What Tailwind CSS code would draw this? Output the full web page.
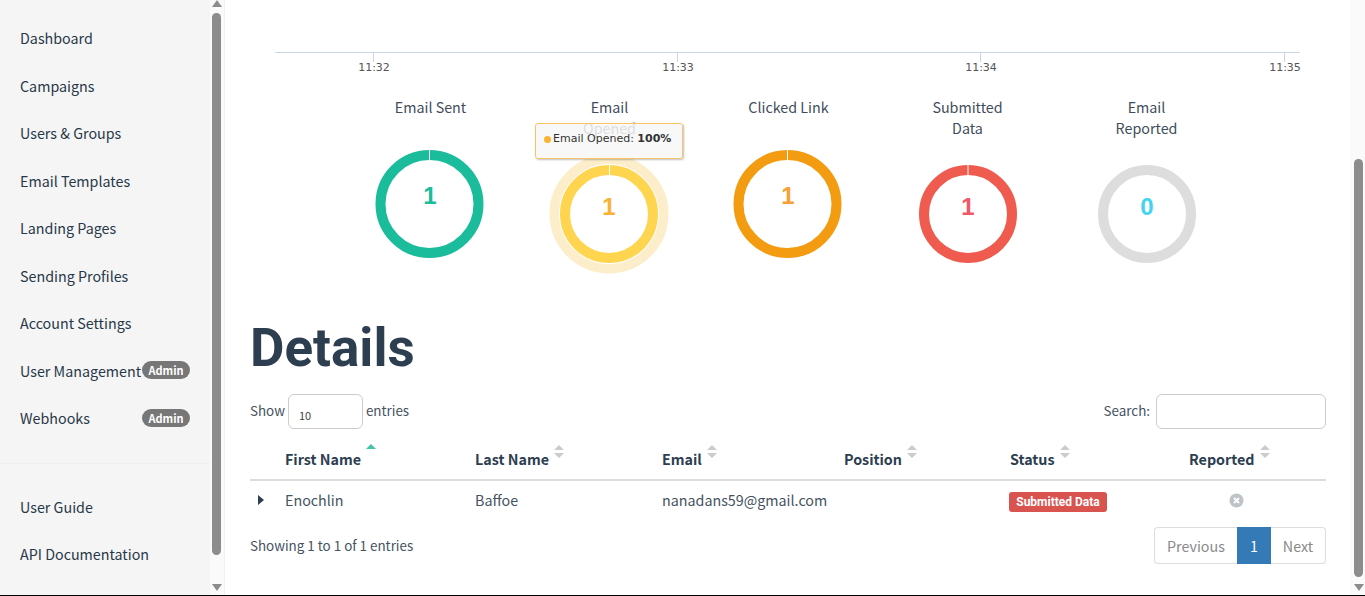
<!DOCTYPE html>
<html lang="en">
<head>
    <meta charset="UTF-8">
    <title>Campaign Results</title>
    <script src="https://cdn.jsdelivr.net/npm/@tailwindcss/browser@4"></script>
</head>
<body class="bg-white overflow-hidden font-['Noto_Sans_CJK_SC','Source_Sans_Pro',sans-serif] text-[#2c3e50]">
<div class="flex flex-col w-[1365px] h-[596px] overflow-hidden">
    <div class="flex flex-1 min-h-0">

        <!-- Sidebar -->
        <aside class="w-[210px] shrink-0 bg-[#f5f5f5] text-[14.3px] text-[#283848]">
            <nav class="pt-[14px]">
                <a class="flex items-center h-[47.5px] px-5">Dashboard</a>
                <a class="flex items-center h-[47.5px] px-5">Campaigns</a>
                <a class="flex items-center h-[47.5px] px-5">Users &amp; Groups</a>
                <a class="flex items-center h-[47.5px] px-5">Email Templates</a>
                <a class="flex items-center h-[47.5px] px-5">Landing Pages</a>
                <a class="flex items-center h-[47.5px] px-5">Sending Profiles</a>
                <a class="flex items-center h-[47.5px] px-5">Account Settings</a>
                <a class="flex items-center justify-between h-[47.5px] px-5 whitespace-nowrap">User Management<span class="w-[48px] h-[18px] shrink-0 rounded-full bg-[#777] text-white text-[11px] font-bold flex items-center justify-center">Admin</span></a>
                <a class="flex items-center justify-between h-[47.5px] px-5">Webhooks<span class="w-[48px] h-[18px] mt-px shrink-0 rounded-full bg-[#777] text-white text-[11px] font-bold flex items-center justify-center">Admin</span></a>
            </nav>
            <div class="mt-[21px] border-t border-[#eeeeee] pt-[19px]">
                <a class="flex items-center h-[47.5px] px-5">User Guide</a>
                <a class="flex items-center h-[47.5px] px-5">API Documentation</a>
            </div>
        </aside>

        <!-- Sidebar scrollbar -->
        <div class="w-[15px] shrink-0 bg-[#fafafa] border-r border-[#f0f0f0] flex flex-col items-start pl-[2px]">
            <svg class="w-[10px] h-[7px] shrink-0" viewBox="0 0 10 7"><path d="M5 0 L10 7 L0 7 Z" fill="#8c8c8c"/></svg>
            <div class="w-[9px] h-[542px] mt-[6px] rounded-full bg-[#8c8c8c]"></div>
            <svg class="w-[10px] h-[7px] mt-[29px] shrink-0" viewBox="0 0 10 7"><path d="M0 0 L10 0 L5 7 Z" fill="#8c8c8c"/></svg>
        </div>

        <!-- Main -->
        <main class="flex-1 min-w-0 relative">
            <svg class="block w-[1125px] h-[96px]" viewBox="0 0 1125 96">
                <line x1="50" y1="52.5" x2="1075" y2="52.5" stroke="#ccd6eb"/>
                <g stroke="#ccd6eb">
                    <line x1="148.5" y1="52" x2="148.5" y2="62"/>
                    <line x1="452.5" y1="52" x2="452.5" y2="62"/>
                    <line x1="755.5" y1="52" x2="755.5" y2="62"/>
                    <line x1="1059.5" y1="52" x2="1059.5" y2="62"/>
                </g>
                <g font-family="'DejaVu Sans', sans-serif" font-size="11" fill="#555" text-anchor="middle">
                    <text x="149" y="71">11:32</text>
                    <text x="453" y="71">11:33</text>
                    <text x="756" y="71">11:34</text>
                    <text x="1060" y="71">11:35</text>
                </g>
            </svg>

            <!-- Donuts -->
            <div class="grid grid-cols-[179px_179px_179px_179px_179px] ml-[116px] text-[14.3px] leading-[21px] text-[#3f4d5b] text-center">
                <div class="flex flex-col items-center">
                    <div class="w-[100px]">Email Sent</div>
                    <svg class="w-[130px] h-[130px] mt-[22px]" viewBox="0 0 130 130">
                        <circle cx="63.5" cy="65" r="49" fill="none" stroke="#1abc9c" stroke-width="10"/>
                        <line x1="63.5" y1="10" x2="63.5" y2="21" stroke="#fff"/>
                        <text x="64" y="65" font-family="'Liberation Sans', sans-serif" font-weight="700" font-size="24" fill="#1abc9c" text-anchor="middle">1</text>
                    </svg>
                </div>
                <div class="flex flex-col items-center">
                    <div class="w-[70px]">Email Opened</div>
                    <svg class="w-[130px] h-[130px] mt-[11px]" viewBox="0 0 130 130">
                        <circle cx="64" cy="65" r="54.75" fill="none" stroke="#fdeecb" stroke-width="9.5"/>
                        <circle cx="64" cy="65" r="44" fill="none" stroke="#ffd54f" stroke-width="10"/>
                        <line x1="64.5" y1="15" x2="64.5" y2="26" stroke="#fff"/>
                        <text x="64" y="66" font-family="'Liberation Sans', sans-serif" font-weight="700" font-size="24" fill="#f9b233" text-anchor="middle">1</text>
                    </svg>
                </div>
                <div class="flex flex-col items-center">
                    <div class="w-[100px]">Clicked Link</div>
                    <svg class="w-[130px] h-[130px] mt-[22px]" viewBox="0 0 130 130">
                        <circle cx="63.5" cy="65" r="49" fill="none" stroke="#f39c12" stroke-width="10"/>
                        <line x1="63.5" y1="10" x2="63.5" y2="21" stroke="#fff"/>
                        <text x="64" y="65" font-family="'Liberation Sans', sans-serif" font-weight="700" font-size="24" fill="#f7a035" text-anchor="middle">1</text>
                    </svg>
                </div>
                <div class="flex flex-col items-center">
                    <div class="w-[80px]">Submitted Data</div>
                    <svg class="w-[130px] h-[130px] mt-[11px]" viewBox="0 0 130 130">
                        <circle cx="65" cy="65" r="44" fill="none" stroke="#f05b4f" stroke-width="10"/>
                        <line x1="65" y1="15" x2="65" y2="26" stroke="#fff"/>
                        <text x="65" y="66" font-family="'Liberation Sans', sans-serif" font-weight="700" font-size="24" fill="#f25767" text-anchor="middle">1</text>
                    </svg>
                </div>
                <div class="flex flex-col items-center">
                    <div class="w-[70px]">Email Reported</div>
                    <svg class="w-[130px] h-[130px] mt-[11px]" viewBox="0 0 130 130">
                        <circle cx="65" cy="65" r="44" fill="none" stroke="#dddddd" stroke-width="10"/>
                        <text x="65" y="66" font-family="'Liberation Sans', sans-serif" font-weight="700" font-size="24" fill="#3fd4f0" text-anchor="middle">0</text>
                    </svg>
                </div>
            </div>

            <!-- Chart tooltip -->
            <div class="absolute left-[310px] top-[123px] w-[148px] h-[36px] rounded-[3px] border border-[#f7c468] bg-[#f7f7f7]/85 shadow-[1px_1px_2px_rgba(0,0,0,0.25)] flex items-center pl-[8px] pb-[3px] font-['DejaVu_Sans',sans-serif] text-[11px] text-[#333] whitespace-nowrap">
                <span class="w-[7px] h-[7px] rounded-full bg-[#f9b233] mr-[2px]"></span>Email Opened:&nbsp;<b>100%</b>
            </div>

            <!-- Details -->
            <div class="pl-[25px] pr-[24px] mt-[36px]">
                <h1 class="font-['Roboto',sans-serif] font-bold text-[53px] leading-[66px] text-[#2c3e50]">Details</h1>

                <div class="flex items-center justify-between mt-[13px] text-[13.4px] text-[#45535f]">
                    <div class="flex items-center gap-[3px]">
                        <span class="pb-[3px]">Show</span>
                        <div class="w-[75px] h-[35px] border border-[#cccccc] rounded-[6px] text-[11px] pl-[10px] pt-[11px] leading-[18px] text-[#444]">10</div>
                        <span class="pb-[3px]">entries</span>
                    </div>
                    <div class="flex items-center gap-[6px]">
                        <span class="pb-[3px]">Search:</span>
                        <div class="w-[170px] h-[35px] border border-[#cccccc] rounded-[6px]"></div>
                    </div>
                </div>

                <table class="table-fixed w-[1076px] mt-[10px] border-collapse text-[14.3px]">
                    <colgroup>
                        <col class="w-[35px]"><col class="w-[190px]"><col class="w-[187px]"><col class="w-[182px]"><col class="w-[166px]"><col class="w-[179px]"><col>
                    </colgroup>
                    <thead>
                        <tr class="h-[41px] border-b-2 border-[#dddddd] text-left">
                            <th></th>
                            <th class="font-bold align-bottom pb-[10px] leading-[20px]"><span class="inline-flex items-start">First Name<svg class="w-[10px] h-[14px] ml-[5px] -mt-[5px]" viewBox="0 0 10 14"><path d="M5 0 L10 5 L0 5 Z" fill="#45c4a8"/></svg></span></th>
                            <th class="font-bold align-bottom pb-[10px] leading-[20px]"><span class="inline-flex items-start">Last Name<svg class="w-[10px] h-[14px] ml-[5px] -mt-[4px]" viewBox="0 0 10 14"><path d="M5 0 L10 5 L0 5 Z M0 8 L10 8 L5 13 Z" fill="#cccccc"/></svg></span></th>
                            <th class="font-bold align-bottom pb-[10px] leading-[20px]"><span class="inline-flex items-start">Email<svg class="w-[10px] h-[14px] ml-[5px] -mt-[4px]" viewBox="0 0 10 14"><path d="M5 0 L10 5 L0 5 Z M0 8 L10 8 L5 13 Z" fill="#cccccc"/></svg></span></th>
                            <th class="font-bold align-bottom pb-[10px] leading-[20px]"><span class="inline-flex items-start">Position<svg class="w-[10px] h-[14px] ml-[5px] -mt-[4px]" viewBox="0 0 10 14"><path d="M5 0 L10 5 L0 5 Z M0 8 L10 8 L5 13 Z" fill="#cccccc"/></svg></span></th>
                            <th class="font-bold align-bottom pb-[10px] leading-[20px]"><span class="inline-flex items-start">Status<svg class="w-[10px] h-[14px] ml-[5px] -mt-[4px]" viewBox="0 0 10 14"><path d="M5 0 L10 5 L0 5 Z M0 8 L10 8 L5 13 Z" fill="#cccccc"/></svg></span></th>
                            <th class="font-bold align-bottom pb-[10px] leading-[20px]"><span class="inline-flex items-start">Reported<svg class="w-[10px] h-[14px] ml-[5px] -mt-[4px]" viewBox="0 0 10 14"><path d="M5 0 L10 5 L0 5 Z M0 8 L10 8 L5 13 Z" fill="#cccccc"/></svg></span></th>
                        </tr>
                    </thead>
                    <tbody>
                        <tr class="h-[39px] text-[#45535f]">
                            <td><svg class="w-[6px] h-[10px] ml-[8px]" viewBox="0 0 6 10"><path d="M0 0 L6 5 L0 10 Z" fill="#2c3e50"/></svg></td>
                            <td>Enochlin</td>
                            <td>Baffoe</td>
                            <td>nanadans59@gmail.com</td>
                            <td></td>
                            <td><span class="-ml-px inline-flex items-center justify-center w-[98px] h-[20px] rounded-[3px] bg-[#d9534f] text-white text-[12px] font-bold font-['Roboto',sans-serif]">Submitted Data</span></td>
                            <td><svg class="w-[15px] h-[15px] ml-[40px]" viewBox="0 0 15 15"><circle cx="7.5" cy="7.5" r="7" fill="#bdc3c7"/><path d="M5 5 L10 10 M10 5 L5 10" stroke="#fff" stroke-width="2"/></svg></td>
                        </tr>
                    </tbody>
                </table>

                <div class="flex items-center justify-between mt-[8px] text-[13.4px] text-[#45535f]">
                    <span>Showing 1 to 1 of 1 entries</span>
                    <div class="flex h-[37px] text-[14.3px] text-[#8a8a8a]">
                        <span class="w-[83px] flex items-center justify-center border border-[#dddddd] border-r-0 rounded-l-[4px]">Previous</span>
                        <span class="w-[34px] flex items-center justify-center bg-[#337ab7] text-white">1</span>
                        <span class="w-[55px] flex items-center justify-center border border-[#dddddd] border-l-0 rounded-r-[4px]">Next</span>
                    </div>
                </div>
            </div>
        </main>

        <!-- Page scrollbar -->
        <div class="w-[15px] shrink-0 bg-[#fafafa] flex flex-col items-start pl-[4px]">
            <div class="w-[9px] h-[418px] mt-[159px] rounded-full bg-[#8c8c8c]"></div>
            <svg class="w-[10px] h-[7px] mt-[7px] shrink-0" viewBox="0 0 10 7"><path d="M0 0 L10 0 L5 7 Z" fill="#8c8c8c"/></svg>
        </div>
    </div>
    <div class="h-px shrink-0 bg-black"></div>
</div>
</body>
</html>
